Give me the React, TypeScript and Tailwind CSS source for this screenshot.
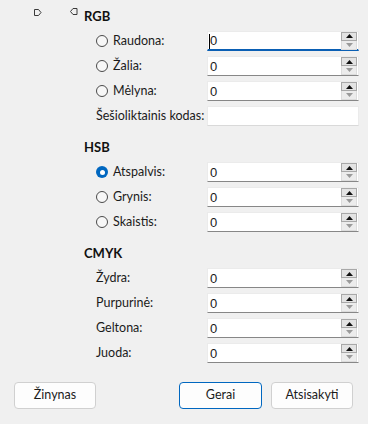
import React from "react"

type Row = {
  label: string
  radio?: boolean
  checked?: boolean
  value?: string
  spin?: boolean
  focused?: boolean
}

const rgb: Row[] = [
  { label: "Raudona:", radio: true, value: "0", spin: true, focused: true },
  { label: "Žalia:", radio: true, value: "0", spin: true },
  { label: "Mėlyna:", radio: true, value: "0", spin: true },
  { label: "Šešioliktainis kodas:", value: "" },
]

const hsb: Row[] = [
  { label: "Atspalvis:", radio: true, checked: true, value: "0", spin: true },
  { label: "Grynis:", radio: true, value: "0", spin: true },
  { label: "Skaistis:", radio: true, value: "0", spin: true },
]

const cmyk: Row[] = [
  { label: "Žydra:", value: "0", spin: true },
  { label: "Purpurinė:", value: "0", spin: true },
  { label: "Geltona:", value: "0", spin: true },
  { label: "Juoda:", value: "0", spin: true },
]

const Radio = ({ checked }: { checked?: boolean }) =>
  checked ? (
    <span className="w-[12px] h-[12px] rounded-full bg-[#0067c0] flex items-center justify-center shrink-0">
      <span className="w-[5px] h-[5px] rounded-full bg-white" />
    </span>
  ) : (
    <span className="w-[12px] h-[12px] rounded-full border border-[#4a4a4a] bg-[#f7f7f7] shrink-0" />
  )

const Spinner = () => (
  <div className="flex flex-col w-[16px] h-[18px] mr-[1px]">
    <div className="h-[9px] border border-[#a8a8a8] bg-[#e3e3e3] flex items-center justify-center">
      <svg width="7" height="4" viewBox="0 0 7 4"><path d="M3.5 0 L7 4 L0 4 Z" fill="#111" /></svg>
    </div>
    <div className="h-[9px] border border-[#dcdcdc] border-t-0 bg-[#ececec] flex items-center justify-center">
      <svg width="7" height="4" viewBox="0 0 7 4"><path d="M0 0 L7 0 L3.5 4 Z" fill="#9a9a9a" /></svg>
    </div>
  </div>
)

const Field = ({ row }: { row: Row }) => (
  <div
    className={
      "relative w-[152px] h-[20px] bg-white flex items-center border border-[#ebebeb] " +
      (row.focused
        ? "border-b-2 border-b-[#0a5fb4]"
        : row.spin
        ? "border-b-[#878787]"
        : "border-b-[#d9d9d9]")
    }
  >
    <span className="flex-1 pl-[2px] text-[13px] text-[#1a1a1a] leading-none font-['Liberation_Sans',sans-serif]">
      {row.value}
    </span>
    {row.focused && <span className="absolute left-[1px] top-[2px] w-[1px] h-[15px] bg-black" />}
    {row.spin && <Spinner />}
  </div>
)

const FieldRow = ({ row }: { row: Row }) => (
  <div className="flex items-center h-[20px]">
    <div className="w-[207px] pl-[96px] flex items-center gap-[5px] whitespace-nowrap">
      {row.radio && <Radio checked={row.checked} />}
      <span className="text-[12.5px] text-[#1b1b1b]">{row.label}</span>
    </div>
    <Field row={row} />
  </div>
)

const Header = ({ title }: { title: string }) => (
  <div className="h-[17px] pl-[84px] flex items-center text-[13px] font-bold text-[#111]">{title}</div>
)

const Section = ({ title, rows }: { title: string; rows: Row[] }) => (
  <div className="flex flex-col">
    <Header title={title} />
    <div className="flex flex-col gap-[5px] mt-[6px]">
      {rows.map((r) => (
        <FieldRow key={r.label} row={r} />
      ))}
    </div>
  </div>
)

export default function App() {
  return (
    <div className="w-[368px] h-[424px] bg-[#f0f0f0] font-['Lato',sans-serif] overflow-hidden">
      <div className="relative flex flex-col gap-[13px] pt-[8px]">
        <svg className="absolute left-[34px] top-[8px]" width="8" height="9" viewBox="0 0 8 9">
          <path d="M0.5 1.5 H4.5 L7 4.5 L4.5 7.5 H0.5 Z" fill="none" stroke="#3a3a3a" strokeWidth="1" />
        </svg>
        <svg className="absolute left-[70px] top-[7px]" width="8" height="9" viewBox="0 0 8 9">
          <path d="M7 1.5 H3 L0.5 4.5 L3 7.5 H7 Z" fill="none" stroke="#3a3a3a" strokeWidth="1" />
        </svg>
        <Section title="RGB" rows={rgb} />
        <Section title="HSB" rows={hsb} />
        <Section title="CMYK" rows={cmyk} />
      </div>
      <div className="flex items-center mt-[19px] px-[14px] text-[12.5px] text-[#1b1b1b]">
        <button className="w-[82px] h-[27px] rounded-[4px] bg-[#fdfdfd] border border-[#d0d0d0]">Žinynas</button>
        <div className="flex-1" />
        <button className="w-[83px] h-[27px] rounded-[4px] bg-[#fdfdfd] border border-[#0067c0]">Gerai</button>
        <button className="w-[82px] h-[27px] rounded-[4px] bg-[#fdfdfd] border border-[#d0d0d0] ml-[9px] mr-[1px]">Atsisakyti</button>
      </div>
    </div>
  )
}
